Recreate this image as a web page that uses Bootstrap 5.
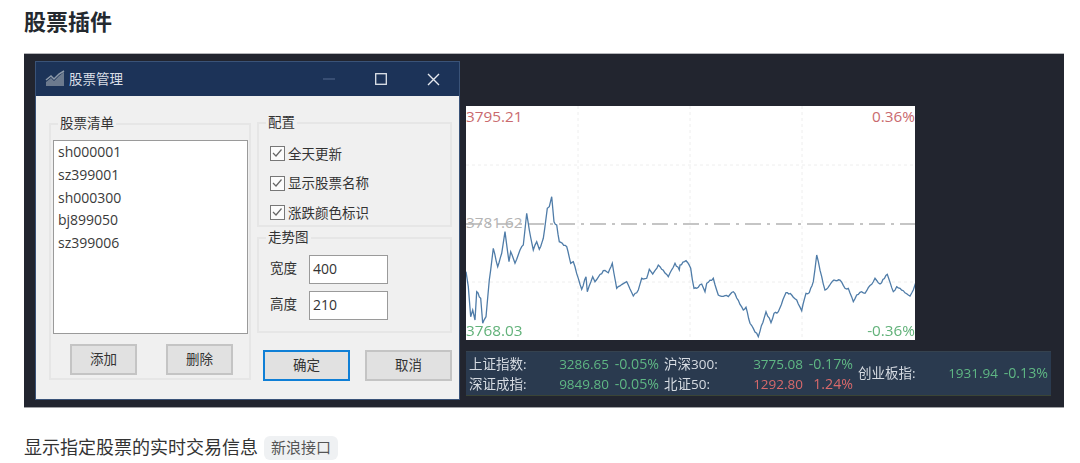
<!DOCTYPE html>
<html lang="zh-CN">
<head>
    <meta charset="UTF-8">
    <meta name="viewport" content="width=device-width, initial-scale=1.0">
    <title>股票插件</title>
    <link href="https://cdn.jsdelivr.net/npm/bootstrap@5.3.3/dist/css/bootstrap.min.css" rel="stylesheet">
    <style>
        html, body { height: 463px; overflow: hidden; }
        body { font-family: "Liberation Sans", "Noto Sans CJK SC", sans-serif; color: #24292f; background: #fff; padding: 9px 24px 0; }
        h1.page-title { font-size: 22px; font-weight: 700; line-height: 28px; margin: 0 0 16px; font-family: "Liberation Sans", "Noto Sans CJK SC", sans-serif; }
        .shot { position: relative; width: 1040px; height: 355px; background: #22252f; border-top: 1px solid #b5b6ba; border-bottom: 1px solid #a0a1a5; font-family: "Open Sans", "Noto Sans CJK SC", sans-serif; font-size: 14px; }
        .shot-inner { filter: blur(.45px); }

        /* dialog */
        .win { position: absolute; left: 11px; top: 7px; width: 425px; height: 339px; background: #f0f0f0; border: 1px solid #3a5378; color: #333; }
        .win-title { height: 34px; background: #1c3358; color: #d9dee6; padding: 0 0 0 9px; font-size: 13.5px; }
        .win-title svg.logo { margin-right: 4px; }
        .win-ctl { width: 52px; text-align: center; line-height: 0; }
        .win-body { padding: 27px 6px 0 13px; gap: 6px; }
        .gbox { margin: 0; padding: 0; border: 2px solid #e6e6e6; position: relative; flex: none; }
        .gbox > legend { position: absolute; top: -11px; left: 7px; float: none; width: auto; margin: 0; padding: 0 2px; font-size: 13.5px; line-height: 18px; background: #f0f0f0; color: #333; }
        .g-list { width: 202px; height: 257px; padding: 15px 1px 0 2px; }
        .stock-list { height: 194px; background: #fff; border: 1px solid #9a9a9a; padding: 0 4px; margin-bottom: 10px; }
        .stock-list div { height: 22.8px; line-height: 21px; font-size: 14px; color: #3a3a3a; }
        .btn-win { width: 67px; height: 31px; background: #e1e1e1; border: 2px solid #c4c4c4; font-size: 13.5px; color: #333; line-height: 27px; text-align: center; }
        .g-btns { padding: 0 15px 0 17px; }
        .col-right { width: 195px; flex: none; }
        .g-conf { height: 105px; padding: 15px 0 0 11px; margin-top: -1px; }
        .chk { height: 29.5px; gap: 3px; font-size: 13.5px; }
        .chk-box { width: 15px; height: 15px; border: 1.5px solid #777; background: #fcfcfc; flex: none; line-height: 0; }
        .g-trend { height: 96px; margin-top: 10px; padding: 16px 0 0 11px; }
        .fld { gap: 12px; font-size: 13.5px; height: 36px; }
        .fld-input { width: 79px; height: 29px; background: #fff; border: 1.5px solid #9a9a9a; padding-left: 3px; line-height: 26px; font-size: 14px; }
        .dlg-btns { padding: 17px 0 0 6px; gap: 15px; }
        .dlg-btn { width: 87px; height: 31px; line-height: 27px; }
        .dlg-btn.is-default { border-color: #0f7fd6; }

        /* chart */
        .chart { position: absolute; left: 442px; top: 52px; width: 449px; height: 234px; background: #fff; font-size: 15.3px; line-height: 20px; }
        .chart svg { display: block; }
        .ch-l { position: absolute; }
        .c-up { color: #c96a6e; }
        .c-mid { color: #b4b4b4; }
        .c-down { color: #62b27a; }

        /* ticker */
        .ticker { position: absolute; left: 442px; top: 297px; width: 585px; height: 45px; background: #2a3a4f; font-size: 13.5px; line-height: 20px; padding: 2px 0 0 3px; color: #d6dbe2; border-top: 1px solid #35424f; border-bottom: 1px solid #3a4436; }
        .t-name { width: 60px; white-space: nowrap; }
        .t-val { text-align: right; }
        .tk-a .t-val { width: 80px; }
        .t-pct { width: 50px; text-align: right; font-size: 14.2px; }
        .tk-b { margin-left: 5px; }
        .tk-b .t-name { width: 60px; }
        .tk-b .t-val { width: 79px; }
        .tk-b .t-pct { width: 50px; }
        .tk-c { margin-left: 5px; }
        .tk-c .t-val { width: 80px; }
        .t-g { color: #5fb784; }
        .t-r { color: #d8696b; }

        .caption { margin-top: 27px; font-size: 18px; line-height: 26px; color: #333; gap: 6px; }
        .tag-api { background: #eff1f3; border-radius: 6px; padding: 0 7px; font-size: 15px; line-height: 24px; color: #555; }
    </style>
</head>
<body>
    <h1 class="page-title">股票插件</h1>

    <div class="shot">
        <div class="shot-inner">
            <!-- 股票管理 dialog -->
            <div class="win">
                <div class="win-title d-flex align-items-center">
                    <svg class="logo" width="20" height="18" viewBox="0 0 20 18">
                        <path d="M1 16V12L6 8L9 11L14 6L19 2V16Z" fill="#6c7a8e"/>
                        <path d="M1 10L6 6L9 9L14 4L19 1" fill="none" stroke="#8d99a9" stroke-width="1.5"/>
                    </svg>
                    <span class="flex-grow-1">股票管理</span>
                    <span class="win-ctl"><svg width="12" height="12" viewBox="0 0 12 12"><path d="M0 6H12" stroke="#4b6285" stroke-width="1.2"/></svg></span>
                    <span class="win-ctl"><svg width="12" height="12" viewBox="0 0 12 12"><rect x=".7" y=".7" width="10.6" height="10.6" fill="none" stroke="#dfe4ea" stroke-width="1.3"/></svg></span>
                    <span class="win-ctl"><svg width="13" height="13" viewBox="0 0 13 13"><path d="M1 1L12 12M12 1L1 12" stroke="#e6eaef" stroke-width="1.4"/></svg></span>
                </div>
                <div class="win-body d-flex">
                    <fieldset class="gbox g-list">
                        <legend>股票清单</legend>
                        <div class="stock-list">
                            <div>sh000001</div>
                            <div>sz399001</div>
                            <div>sh000300</div>
                            <div>bj899050</div>
                            <div>sz399006</div>
                        </div>
                        <div class="g-btns d-flex justify-content-between">
                            <div class="btn-win">添加</div>
                            <div class="btn-win">删除</div>
                        </div>
                    </fieldset>
                    <div class="col-right">
                        <fieldset class="gbox g-conf">
                            <legend>配置</legend>
                            <div class="chk d-flex align-items-center"><span class="chk-box"><svg width="12" height="12" viewBox="0 0 12 12"><path d="M2 6L5 9L10.5 2.5" fill="none" stroke="#666" stroke-width="1.2"/></svg></span>全天更新</div>
                            <div class="chk d-flex align-items-center"><span class="chk-box"><svg width="12" height="12" viewBox="0 0 12 12"><path d="M2 6L5 9L10.5 2.5" fill="none" stroke="#666" stroke-width="1.2"/></svg></span>显示股票名称</div>
                            <div class="chk d-flex align-items-center"><span class="chk-box"><svg width="12" height="12" viewBox="0 0 12 12"><path d="M2 6L5 9L10.5 2.5" fill="none" stroke="#666" stroke-width="1.2"/></svg></span>涨跌颜色标识</div>
                        </fieldset>
                        <fieldset class="gbox g-trend">
                            <legend>走势图</legend>
                            <div class="fld d-flex align-items-start"><span class="lh-lg">宽度</span><div class="fld-input">400</div></div>
                            <div class="fld d-flex align-items-start"><span class="lh-lg">高度</span><div class="fld-input">210</div></div>
                        </fieldset>
                        <div class="dlg-btns d-flex">
                            <div class="btn-win dlg-btn is-default">确定</div>
                            <div class="btn-win dlg-btn">取消</div>
                        </div>
                    </div>
                </div>
            </div>

            <!-- 走势图 -->
            <div class="chart">
                <svg id="chartSvg" width="449" height="234" viewBox="0 0 449 234">
                    <g stroke="#eeeeee" stroke-width="1" stroke-dasharray="3 3" fill="none">
                        <path d="M0 59H449M0 176H449M112 0V234M224 0V234M336 0V234"/>
                    </g>
                    <path d="M0 118H449" stroke="#b3b3b3" stroke-width="1.3" stroke-dasharray="16 6 3 6" fill="none"/>
                    <polyline id="priceLine" fill="none" stroke="#4f7ca8" stroke-width="1.3"/>
                </svg>
                <span class="ch-l c-up" style="left:0;top:0">3795.21</span>
                <span class="ch-l c-up" style="right:0;top:0">0.36%</span>
                <span class="ch-l c-mid" style="left:0;top:106px">3781.62</span>
                <span class="ch-l c-down" style="left:0;bottom:0">3768.03</span>
                <span class="ch-l c-down" style="right:0;bottom:0">-0.36%</span>
            </div>

            <!-- 行情条 -->
            <div class="ticker d-flex">
                <div class="tk-a">
                    <div class="d-flex"><span class="t-name">上证指数:</span><span class="t-val t-g">3286.65</span><span class="t-pct t-g">-0.05%</span></div>
                    <div class="d-flex"><span class="t-name">深证成指:</span><span class="t-val t-g">9849.80</span><span class="t-pct t-g">-0.05%</span></div>
                </div>
                <div class="tk-b">
                    <div class="d-flex"><span class="t-name">沪深300:</span><span class="t-val t-g">3775.08</span><span class="t-pct t-g">-0.17%</span></div>
                    <div class="d-flex"><span class="t-name">北证50:</span><span class="t-val t-r">1292.80</span><span class="t-pct t-r">1.24%</span></div>
                </div>
                <div class="tk-c d-flex align-items-center pb-1">
                    <span class="t-name">创业板指:</span><span class="t-val t-g">1931.94</span><span class="t-pct t-g">-0.13%</span>
                </div>
            </div>
        </div>
    </div>

    <div class="caption d-flex align-items-center">
        <span>显示指定股票的实时交易信息</span>
        <span class="tag-api">新浪接口</span>
    </div>

    <script src="https://cdn.jsdelivr.net/npm/bootstrap@5.3.3/dist/js/bootstrap.bundle.min.js"></script>
    <script>
        // key points read off the picture, in page pixels / 3 (zoom coordinates)
        var left = [[18,515],[25,560],[32,650],[38,630],[45,660],[50,575],[62,595],[68,670],[78,650],[88,540],[100,445],[113,500],[125,460],[135,395],[147,485],[152,455],[165,490],[180,450],[190,435],[200,340],[208,390],[220,450],[230,425],[238,448],[250,415],[262,325],[268,320],[275,290],[282,365],[290,375],[298,425],[320,440],[332,490],[340,485],[365,568],[378,530],[382,575],[398,530],[405,545],[430,512],[445,518],[457,490],[470,565],[500,545],[520,588],[535,570],[545,535],[560,535],[568,508],[578,522],[595,495],[625,530],[645,490],[658,510]];
        var right = [[0,495],[18,482],[32,505],[42,565],[50,565],[65,552],[75,575],[80,550],[100,535],[115,585],[145,590],[160,575],[190,630],[198,622],[210,670],[235,710],[258,635],[273,668],[282,640],[295,635],[318,578],[335,585],[350,600],[365,632],[378,580],[388,578],[400,545],[410,465],[425,530],[435,570],[462,540],[480,540],[495,565],[505,565],[520,605],[530,585],[545,575],[555,580],[585,535],[600,552],[622,523],[640,575],[650,560],[690,588],[700,570],[707,548]];
        var pts = [];
        left.forEach(function (p) { pts.push([460 + p[0] / 3 - 466, 100 + p[1] / 3 - 106]); });
        right.forEach(function (p) { pts.push([680 + p[0] / 3 - 466, 100 + p[1] / 3 - 106]); });

        // add small jitter between key points so the line looks like tick data
        var seed = 7, out = [];
        function rnd() { seed = (seed * 16807) % 2147483647; return seed / 2147483647 - 0.5; }
        for (var i = 0; i < pts.length - 1; i++) {
            var a = pts[i], b = pts[i + 1], n = Math.max(1, Math.round((b[0] - a[0]) / 1.6));
            for (var j = 0; j < n; j++) {
                var t = j / n, jit = j === 0 ? 0 : rnd() * 2;
                out.push((a[0] + (b[0] - a[0]) * t).toFixed(1) + ',' + (a[1] + (b[1] - a[1]) * t + jit).toFixed(1));
            }
        }
        out.push(pts[pts.length - 1].map(function (v) { return v.toFixed(1); }).join(','));
        document.getElementById('priceLine').setAttribute('points', out.join(' '));
    </script>
</body>
</html>
